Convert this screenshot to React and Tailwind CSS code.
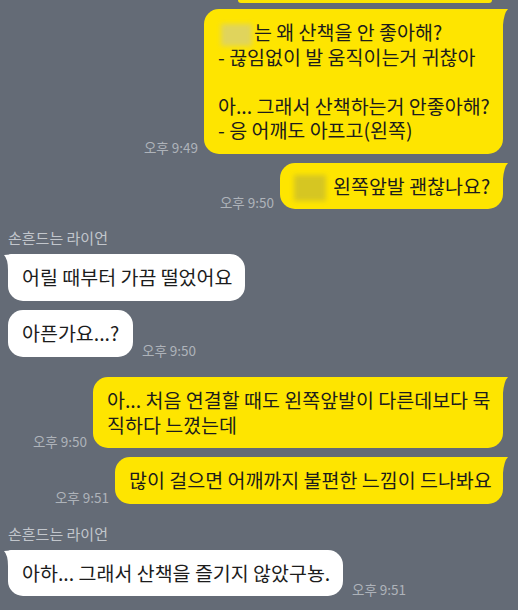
import clsx from 'clsx'

function YellowTail() {
  return (
    <svg
      className="absolute right-[-6px] top-0"
      width="12"
      height="16"
      viewBox="0 0 12 16"
      aria-hidden="true"
    >
      <path d="M0 0 L11 0 Q7 4 6 16 L0 16 Z" fill="#fee500" />
    </svg>
  )
}

function WhiteTail() {
  return (
    <svg
      className="absolute left-[-4px] top-0"
      width="12"
      height="16"
      viewBox="0 0 12 16"
      aria-hidden="true"
    >
      <path d="M12 0 L0 1 Q4 5 4 16 L12 16 Z" fill="#ffffff" />
    </svg>
  )
}

function Time({ children }) {
  return (
    <span className="shrink-0 whitespace-nowrap text-[13.5px] leading-[13px] text-[#aeb3ba]">
      {children}
    </span>
  )
}

function Sent({ time, className, width, children }) {
  return (
    <div className={clsx('flex items-end justify-end gap-[6px] pr-[15px]', className)}>
      <Time>{time}</Time>
      <div
        className={clsx(
          'relative whitespace-nowrap rounded-[15px] rounded-tr-[3px] bg-[#fee500] px-[14px] py-[11px] text-[19.5px] leading-[24.5px] text-[#1c1c1c]',
          width,
        )}
      >
        <YellowTail />
        {children}
      </div>
    </div>
  )
}

function Received({ time, className, width, tail, children }) {
  return (
    <div className={clsx('flex items-end gap-[9px] pl-[8px]', className)}>
      <div
        className={clsx(
          'relative whitespace-nowrap rounded-[15px] bg-white px-[14px] py-[11px] text-[19.5px] leading-[24.5px] text-[#1c1c1c]',
          tail && 'rounded-tl-[3px]',
          width,
        )}
      >
        {tail && <WhiteTail />}
        {children}
      </div>
      {time && <Time>{time}</Time>}
    </div>
  )
}

// blurred-out name; negative margins keep it from growing the line box
function Blurred({ className }) {
  return (
    <span
      className={clsx('-my-[6px] inline-block align-middle blur-[2.5px]', className)}
      aria-hidden="true"
    />
  )
}

function Name({ className }) {
  return (
    <p className={clsx('pl-[8px] text-[15px] leading-[18px] text-[#c2c6cc]', className)}>
      손흔드는 라이언
    </p>
  )
}

export default function App() {
  return (
    <div className="flex h-[610px] w-[518px] flex-col overflow-hidden bg-[#646b76] font-['Noto_Sans_CJK_KR','Noto_Sans',sans-serif]">
      <div className="ml-[238px] h-[3px] w-[254px] rounded-b-[3px] bg-[#fee500]" />

      <Sent time="오후 9:49" className="mt-[6px]" width="w-[299px]">
        <Blurred className="ml-[3px] mr-[2px] h-[22px] w-[31px] bg-[#e0d45c]" />
        는 왜 산책을 안 좋아해?
        <br />- 끊임없이 발 움직이는거 귀찮아
        <br />
        <br />아... 그래서 산책하는거 안좋아해?
        <br />- 응 어깨도 아프고(왼쪽)
      </Sent>

      <Sent time="오후 9:50" className="mt-[9px]" width="w-[223px]">
        <Blurred className="mr-[7px] h-[26px] w-[32px] bg-[#d6c622]" />
        왼쪽앞발 괜찮나요?
      </Sent>

      <Name className="mt-[20px]" />
      <Received className="mt-[7px]" width="w-[237px]" tail>
        어릴 때부터 가끔 떨었어요
      </Received>
      <Received time="오후 9:50" className="mt-[9.5px]" width="w-[125px]">
        아픈가요...?
      </Received>

      <Sent time="오후 9:50" className="mt-[20.5px]" width="w-[410px]">
        아... 처음 연결할 때도 왼쪽앞발이 다른데보다 묵
        <br />
        직하다 느꼈는데
      </Sent>
      <Sent time="오후 9:51" className="mt-[9px]" width="w-[388px]">
        많이 걸으면 어깨까지 불편한 느낌이 드나봐요
      </Sent>

      <Name className="mt-[21px]" />
      <Received time="오후 9:51" className="mt-[7px]" width="w-[335px]" tail>
        아하... 그래서 산책을 즐기지 않았구뇽.
      </Received>
    </div>
  )
}
